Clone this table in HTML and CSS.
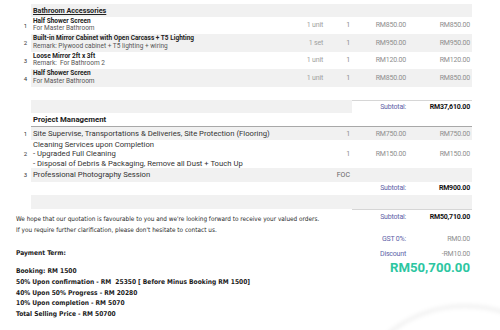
FILE: index.html
```html
<!DOCTYPE html>
<html>
<head>
<meta charset="utf-8">
<link rel="stylesheet" href="styles.css">
</head>
<body>
<svg class="fab" width="500" height="330" viewBox="0 0 500 330" aria-hidden="true">
  <defs>
    <filter id="soft" x="-20%" y="-20%" width="140%" height="140%"><feGaussianBlur stdDeviation="2"/></filter>
  </defs>
  <circle cx="465" cy="426" r="120" fill="none" stroke="#000" stroke-opacity="0.07" stroke-width="3" filter="url(#soft)"/>
</svg>
<div class="page">
  <section class="sec">
    <div class="row r-head1"><div class="num"></div><div class="cells gray head"><div class="desc"><span class="uline">Bathroom Accessories</span></div></div></div>
    <div class="row r-item"><div class="num">1</div><div class="cells">
      <div class="desc"><div class="t">Half Shower Screen</div><div class="s">For Master Bathroom</div></div>
      <div class="unit">1 unit</div><div class="qty">1</div><div class="price">RM850.00</div><div class="amt">RM850.00</div>
    </div></div>
    <div class="row r-item"><div class="num">2</div><div class="cells gray">
      <div class="desc"><div class="t">Built-in Mirror Cabinet with Open Carcass + T5 Lighting</div><div class="s">Remark: Plywood cabinet + T5 lighting + wiring</div></div>
      <div class="unit">1 set</div><div class="qty">1</div><div class="price">RM950.00</div><div class="amt">RM950.00</div>
    </div></div>
    <div class="row r-item"><div class="num">3</div><div class="cells">
      <div class="desc"><div class="t">Loose Mirror 2ft x 3ft</div><div class="s">Remark:&nbsp; For Bathroom 2</div></div>
      <div class="unit">1 unit</div><div class="qty">1</div><div class="price">RM120.00</div><div class="amt">RM120.00</div>
    </div></div>
    <div class="row r-item"><div class="num">4</div><div class="cells gray">
      <div class="desc"><div class="t">Half Shower Screen</div><div class="s">For Master Bathroom</div></div>
      <div class="unit">1 unit</div><div class="qty">1</div><div class="price">RM850.00</div><div class="amt">RM850.00</div>
    </div></div>
    <div class="row r-space"><div class="num"></div><div class="cells"></div></div>
    <div class="row r-sub"><div class="num"></div><div class="cells">
      <div class="fill gray"></div><div class="sl bt">Subtotal:</div><div class="sv bt">RM37,610.00</div>
    </div></div>
  </section>

  <section class="sec">
    <div class="row r-head2"><div class="num"></div><div class="cells head head2 line"><div class="desc">Project Management</div></div></div>
    <div class="row r-pm1"><div class="num">1</div><div class="cells gray pm">
      <div class="desc">Site Supervise, Transportations &amp; Deliveries, Site Protection (Flooring)</div>
      <div class="unit"></div><div class="qty">1</div><div class="price">RM750.00</div><div class="amt">RM750.00</div>
    </div></div>
    <div class="row r-pm2"><div class="num">2</div><div class="cells pm">
      <div class="desc multi"><div>Cleaning Services upon Completion</div><div>- Upgraded Full Cleaning</div><div>- Disposal of Debris &amp; Packaging, Remove all Dust + Touch Up</div></div>
      <div class="unit"></div><div class="qty">1</div><div class="price">RM150.00</div><div class="amt">RM150.00</div>
    </div></div>
    <div class="row r-pm3"><div class="num">3</div><div class="cells gray pm">
      <div class="desc">Professional Photography Session</div>
      <div class="unit"></div><div class="qty foc">FOC</div><div class="price"></div><div class="amt"></div>
    </div></div>
    <div class="row r-sub"><div class="num"></div><div class="cells">
      <div class="fill"></div><div class="sl">Subtotal:</div><div class="sv">RM900.00</div>
    </div></div>
    <div class="row r-space2"><div class="num"></div><div class="cells gray"></div></div>
  </section>

  <section class="bottom">
    <div class="note">
      <p>We hope that our quotation is favourable to you and we're looking forward to receive your valued orders.</p>
      <p>If you require further clarification, please don't hesitate to contact us.</p>
      <p class="term">Payment Term:</p>
      <div class="plan">
        <p>Booking: RM 1500</p>
        <p>50% Upon confirmation - RM&nbsp; 25350 [ Before Minus Booking RM 1500]</p>
        <p>40% Upon 50% Progress - RM 20280</p>
        <p>10% Upon completion - RM 5070</p>
        <p>Total Selling Price - RM 50700</p>
      </div>
    </div>
    <div class="totals">
      <div class="trow t-sub"><div class="tl">Subtotal:</div><div class="tv strong">RM50,710.00</div></div>
      <div class="trow t-gst"><div class="tl">GST 0%:</div><div class="tv">RM0.00</div></div>
      <div class="trow t-disc"><div class="tl">Discount</div><div class="tv">-RM10.00</div></div>
      <div class="grand">RM50,700.00</div>
    </div>
  </section>
</div>
</body>
</html>
```

FILE: styles.css
```css
* { box-sizing: border-box; margin: 0; padding: 0; }
html { background: #fff; overflow: hidden; }
body {
  margin: 0;
  width: 500px;
  height: 330px;
  overflow: hidden;
  position: relative;
  font-family: Roboto, "Liberation Sans", sans-serif;
  color: #222;
  background: #fff;
}
.fab { position: absolute; left: 0; top: 0; z-index: 0; }
.page { padding-top: 4px; position: relative; z-index: 1; }

.row { display: flex; margin-left: 20px; width: 452px; }
.num {
  width: 11px;
  font-size: 6px;
  color: #333;
  display: flex;
  align-items: center;
  justify-content: center;
}
.cells {
  flex: 1;
  display: grid;
  grid-template-columns: 259px 35px 27px 56px 64px;
  align-items: center;
  font-size: 7px;
  letter-spacing: -0.2px;
  color: #8e8e8e;
}
.gray { background: #f1f1f1; }

.head { font-size: 7.2px; font-weight: 700; color: #222; letter-spacing: 0; }
.head2 { font-size: 7.8px; }
.uline { text-decoration: underline; }
.line { border-bottom: 1px solid #a8a8a8; }
.desc { padding-left: 2px; white-space: nowrap; }

.r-head1 { height: 12.5px; }
.r-item { height: 17.6px; }
.r-space { height: 13px; }
.r-sub { height: 13px; }
.r-head2 { height: 14.5px; }
.r-pm1 { height: 12.5px; }
.r-pm2 { height: 28px; }
.r-pm3 { height: 14px; }
.r-space2 { height: 14px; }

.t { font-size: 6.5px; font-weight: 700; line-height: 7.6px; color: #222; letter-spacing: 0; }
.s { font-size: 6.5px; line-height: 7.6px; color: #555; letter-spacing: 0; }

.unit, .qty, .price, .amt { text-align: right; padding-right: 2px; }
.unit { color: #a0a0a0; }

.pm .desc { font-size: 7.7px; color: #333; letter-spacing: 0; }
.multi div { line-height: 9.3px; }
.foc { font-size: 7px; color: #666; letter-spacing: 0; }

.r-sub .cells { align-items: stretch; }
.fill { grid-column: 1 / 4; }
.sl, .sv {
  display: flex;
  align-items: center;
  justify-content: flex-end;
  padding-right: 2px;
}
.sl { color: #6063a8; }
.sv { color: #111; font-weight: 700; }
.bt { border-top: 1px solid #d6d6d6; }

.bottom { display: flex; }
.note {
  width: 352px;
  padding-left: 16px;
  padding-top: 5.5px;
  font-family: "DejaVu Sans Condensed", "DejaVu Sans", sans-serif;
  font-size: 6.4px;
  color: #2a2a2a;
}
.note p { line-height: 11px; white-space: nowrap; }
.note .term { font-weight: 700; color: #1a1a1a; margin-top: 12px; font-size: 6.6px; }
.plan { margin-top: 7px; }
.plan p { font-weight: 700; color: #1a1a1a; line-height: 10.7px; font-size: 6.6px; }

.totals {
  width: 120px;
  border-top: 1px solid #d6d6d6;
  padding-top: 1px;
}
.trow {
  display: grid;
  grid-template-columns: 56px 64px;
  height: 13px;
  align-items: center;
  font-size: 7px;
  letter-spacing: -0.2px;
}
.tl { text-align: right; padding-right: 2px; color: #6063a8; }
.tv { text-align: right; padding-right: 2px; color: #8e8e8e; }
.tv.strong { color: #111; font-weight: 700; }
.t-gst { margin-top: 8.5px; }
.t-disc { margin-top: 2px; }
.grand {
  margin-top: 0.5px;
  text-align: right;
  padding-right: 2px;
  font-size: 13.2px;
  line-height: 14px;
  font-weight: 700;
  color: #2cc6a1;
}
```
